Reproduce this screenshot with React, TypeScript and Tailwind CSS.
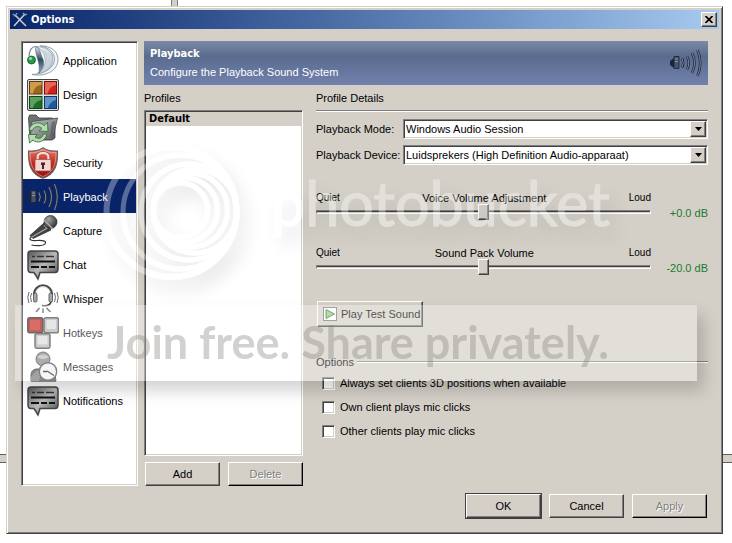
import React from 'react';

type IconProps = {
  className?: string;
};

const RAISED =
  'border border-t-white border-l-white border-r-[#404040] border-b-[#404040] shadow-[inset_-1px_-1px_0_#808080]';
const SUNKEN =
  'border border-t-[#808080] border-l-[#808080] border-r-white border-b-white shadow-[inset_1px_1px_0_#404040,inset_-1px_-1px_0_#d4d0c8]';

const IconApplication = () => (
  <svg viewBox="0 0 32 32" className="h-8 w-8">
    <defs>
      <linearGradient id="tsA" x1="0" y1="0" x2="1" y2="1">
        <stop offset="0" stopColor="#f4f7f9" />
        <stop offset="1" stopColor="#b4bfca" />
      </linearGradient>
      <linearGradient id="tsB" x1="0" y1="0" x2="0" y2="1">
        <stop offset="0" stopColor="#e3eaef" />
        <stop offset=".5" stopColor="#2f4a60" />
        <stop offset="1" stopColor="#9db0be" />
      </linearGradient>
    </defs>
    <path d="M13 1C24 0 31.500 7 31 15C30.500 25 20 32 5 29.500C19 29 27.500 22 27.500 14.500C27.500 8 22 2 13 1Z" fill="#f2f5f7" stroke="#7d8b97" strokeWidth=".8" />
    <path d="M10 1.500C21 2 26.500 8 26 15C25.500 22 20 27 10 28.500C21 23 21 9 10 1.500Z" fill="url(#tsA)" stroke="#94a2af" strokeWidth=".8" />
    <path d="M15 6C22 9 23 18 17 24" fill="none" stroke="#c9d3dc" strokeWidth="2.500" />
    <path d="M9 1.500C13 3 13.500 9 15.500 13C17.500 17 17 23 12 28C13 21 11.500 17 10 12C9 8 8 5 9 1.500Z" fill="url(#tsB)" stroke="#4b6072" strokeWidth=".6" />
    <path d="M2 11C2.500 5 5 1.500 9 1.500" fill="none" stroke="#73828e" strokeWidth="1.200" />
    <circle cx="4.500" cy="15" r="4" fill="#2c9650" stroke="#17572c" strokeWidth=".8" />
    <circle cx="3.500" cy="13.500" r="1.600" fill="#8fe0a5" />
  </svg>
);

const IconDesign = () => (
  <svg viewBox="0 0 32 32" className="h-8 w-8">
    <rect x=".5" y=".5" width="31" height="31" rx="1.500" fill="#dedede" stroke="#444" />
    <rect x="2.500" y="2.500" width="12.500" height="12.500" fill="#a06516" stroke="#5b3a09" />
    <path d="M3 3H14.500V6C9 6 7 10 6 14.500H3Z" fill="#cf9c4e" />
    <rect x="17.500" y="2.500" width="12" height="12.500" fill="#cf2417" stroke="#7a0e08" />
    <path d="M18 3H29V6C25 7 22 9 21 14.500H18Z" fill="#e96353" />
    <rect x="2.500" y="17.500" width="12.500" height="12" fill="#1f6d2b" stroke="#0f4319" />
    <path d="M3 18H14.500V21C9 22 7 25 6 29H3Z" fill="#5c9f60" />
    <rect x="17.500" y="17.500" width="12" height="12" fill="#205a98" stroke="#103762" />
    <path d="M18 18H29V21C25 22 22 25 21 29H18Z" fill="#5f94c8" />
  </svg>
);

const IconDownloads = () => (
  <svg viewBox="0 0 32 32" className="h-8 w-8">
    <defs>
      <linearGradient id="dlA" x1="0" y1="0" x2="1" y2="1">
        <stop offset="0" stopColor="#c3c6c7" />
        <stop offset="1" stopColor="#5b6062" />
      </linearGradient>
    </defs>
    <path d="M1.500 5L2.500 2H9L12 5H25.500V9H28V25L25 27H3Z" fill="#6d7375" stroke="#3c4142" strokeWidth=".8" />
    <path d="M5 8.500L30.500 5L25.500 26.500H3Z" fill="url(#dlA)" stroke="#454a4b" strokeWidth=".8" />
    <path d="M25 9L28.500 8.500L25 24.500H23Z" fill="#555" fillOpacity=".6" />
    <path d="M2 17C4 9 13 8 17 12.500L20.500 9.500L21 18.500L12 18L15 15.500C12 12.500 7 13 5.500 17.500Z" fill="#b5dcae" stroke="#3d7440" strokeWidth=".9" />
    <path d="M20 21C18 29 10 31 6 27L2.500 30L1.500 21.500L10.500 21.500L8 24C11 26.500 15 26 16.500 21Z" fill="#b5dcae" stroke="#3d7440" strokeWidth=".9" />
  </svg>
);

const IconSecurity = () => (
  <svg viewBox="0 0 32 32" className="h-8 w-8">
    <defs>
      <linearGradient id="secA" x1="0" y1="0" x2="0" y2="1">
        <stop offset="0" stopColor="#e98174" />
        <stop offset=".5" stopColor="#c5281f" />
        <stop offset="1" stopColor="#8b100c" />
      </linearGradient>
    </defs>
    <path d="M16 .8C12 3.500 6 4.500 1.500 4C1 18 4 27 16 31.300C28 27 31 18 30.500 4C26 4.500 20 3.500 16 .8Z" fill="url(#secA)" stroke="#666" strokeWidth="1.200" />
    <path d="M16 2.500C12 5 7 6 3 5.600C3 18 6 25.500 16 29.600C26 25.500 29 18 29 5.600C25 6 20 5 16 2.500Z" fill="none" stroke="#f7c1b8" strokeWidth=".6" />
    <path d="M10.500 13V10C10.500 4.500 21.500 4.500 21.500 10V13" fill="none" stroke="#f4dedb" strokeWidth="2.400" />
    <path d="M9 13V10C9 2.500 23 2.500 23 10V13" fill="none" stroke="#9a4540" strokeWidth=".6" />
    <rect x="8" y="12.500" width="16" height="11.500" rx="1" fill="#f1d5d1" stroke="#a54942" strokeWidth=".7" />
    <path d="M14 15.500H18V18H17V22H15V18H14Z" fill="#4a2421" />
  </svg>
);

const IconPlayback = ({ className }: IconProps) => (
  <svg viewBox="0 0 32 32" className={className}>
    <path d="M0 14L4 11V21L0 18Z" fill="#182644" />
    <path d="M4 9.500H9V21.500H4Z" fill="#4a5368" stroke="#1a2336" strokeWidth=".8" />
    <path d="M5 12H8M5 14.500H8" stroke="#8b95a5" strokeWidth="1" />
    <path d="M12 11.500Q14.500 16 12 20.500M17 9.500Q20.500 16 17 22.500M22 6Q27 16 22 26M27.500 3Q33 16 27.500 29" fill="none" stroke="#202b42" strokeWidth="2.600" />
    <path d="M12 11.500Q14.500 16 12 20.500M17 9.500Q20.500 16 17 22.500M22 6Q27 16 22 26M27.500 3Q33 16 27.500 29" fill="none" stroke="#7b8799" strokeWidth="1" />
  </svg>
);

const IconCapture = () => (
  <svg viewBox="0 0 32 32" className="h-8 w-8">
    <defs>
      <radialGradient id="micA" cx=".35" cy=".3" r=".8">
        <stop offset="0" stopColor="#a5a5a5" />
        <stop offset="1" stopColor="#262626" />
      </radialGradient>
    </defs>
    <path d="M17 8L24 15L6 23.500L3 20.500Z" fill="#424242" stroke="#222" strokeWidth=".7" />
    <path d="M17 10L20 13L5 22" stroke="#9f9f9f" strokeWidth="1.300" fill="none" />
    <circle cx="23.500" cy="7" r="6.500" fill="url(#micA)" stroke="#222" strokeWidth=".7" />
    <path d="M17 5L26 14" stroke="#b4b4b4" strokeWidth="1.200" />
    <path d="M4 22C1 25 5 26 10 25.500C16 25 19 26 18.500 28C18 30.500 11 31.500 4.500 30" fill="none" stroke="#333" strokeWidth="1.200" />
  </svg>
);

const IconChat = () => (
  <svg viewBox="0 0 32 32" className="h-8 w-8">
    <defs>
      <linearGradient id="chatA" x1="0" y1="0" x2="1" y2="1">
        <stop offset="0" stopColor="#565656" />
        <stop offset=".5" stopColor="#b9b9b9" />
        <stop offset="1" stopColor="#444" />
      </linearGradient>
    </defs>
    <path d="M4 2H28Q31 2 31 5V20Q31 23.500 28 23.500H13L11 30L7 23.500H4Q1 23.500 1 20V5Q1 2 4 2Z" fill="url(#chatA)" stroke="#444" strokeWidth="1.500" />
    <path d="M5 7.500H8M10 7.500H17M19 7.500H27" stroke="#333" strokeWidth="1.500" />
    <path d="M4 12.500H28M4 18H12M14 18H20M22 18H28" stroke="#111" strokeWidth="2" />
  </svg>
);

const IconWhisper = () => (
  <svg viewBox="0 0 32 32" className="h-8 w-8">
    <path d="M7 12C7-1 25-1 25 12" fill="none" stroke="#494949" strokeWidth="2.200" />
    <path d="M8.500 11C9 1.500 23 1.500 23.500 11" fill="none" stroke="#ccc" strokeWidth=".8" />
    <rect x="6.500" y="10" width="3.500" height="9" rx="1.500" fill="#aaa" stroke="#444" strokeWidth=".8" />
    <rect x="22" y="10" width="3.500" height="9" rx="1.500" fill="#aaa" stroke="#444" strokeWidth=".8" />
    <path d="M4.500 10Q2.500 14.500 4.500 19M2 9Q-.5 14.500 2 20M27.500 10Q29.500 14.500 27.500 19M30 9Q32.500 14.500 30 20" fill="none" stroke="#6a6a6a" strokeWidth="1" />
    <path d="M24 19Q23 23.500 15 22.500" fill="none" stroke="#444" strokeWidth="1.500" />
    <path d="M12.500 25L9 29M16 25.500V30M19.500 25L23.500 29" stroke="#444" strokeWidth="1.400" />
  </svg>
);

const IconHotkeys = () => (
  <svg viewBox="0 0 32 32" className="h-8 w-8">
    <rect x=".8" y=".8" width="15" height="15" rx="2" fill="#a8120d" stroke="#222" strokeWidth="1.500" />
    <rect x="3" y="3" width="10" height="10" rx="1" fill="#c8281f" />
    <rect x="17" y=".8" width="14.500" height="15" rx="2" fill="#b4b4b4" stroke="#444" strokeWidth="1.500" />
    <rect x="19.500" y="3" width="9.500" height="9" rx="1" fill="#dcdcdc" />
    <rect x="8" y="16.800" width="15" height="14.500" rx="2" fill="#b4b4b4" stroke="#444" strokeWidth="1.500" />
    <rect x="10.500" y="19" width="10" height="8.500" rx="1" fill="#dcdcdc" />
  </svg>
);

const IconMessages = () => (
  <svg viewBox="0 0 32 32" className="h-8 w-8">
    <path d="M4 30V24Q4 19 9 18H23Q28 20 29 30Z" fill="#4e4e4e" stroke="#333" />
    <path d="M4 26Q10 17 15 19L12 30H4Z" fill="#777" />
    <circle cx="16" cy="8" r="7" fill="#858585" stroke="#444" />
    <path d="M10 6Q16 1 22 6Q16 10 10 6Z" fill="#bbb" />
    <circle cx="21" cy="20.500" r="8.700" fill="#f1f1f1" stroke="#444" strokeWidth="1.400" />
    <path d="M20 20L27 24.500M16 20.500H20" stroke="#222" strokeWidth="1.300" />
  </svg>
);

const MENU = [
  { label: 'Application', icon: <IconApplication /> },
  { label: 'Design', icon: <IconDesign /> },
  { label: 'Downloads', icon: <IconDownloads /> },
  { label: 'Security', icon: <IconSecurity /> },
  { label: 'Playback', icon: <IconPlayback className="h-8 w-8" /> },
  { label: 'Capture', icon: <IconCapture /> },
  { label: 'Chat', icon: <IconChat /> },
  { label: 'Whisper', icon: <IconWhisper /> },
  { label: 'Hotkeys', icon: <IconHotkeys /> },
  { label: 'Messages', icon: <IconMessages /> },
  { label: 'Notifications', icon: <IconChat /> },
];

const TitleBar = () => (
  <header className="flex h-[19px] items-center bg-linear-to-r from-[#0a246a] to-[#a6caf0] pr-[2px] pl-[2px] text-white">
    <svg viewBox="0 0 16 16" className="mr-[3px] h-4 w-4">
      <path d="M3 3L14 14M13 2L2 14" stroke="#c9cdd3" strokeWidth="1.500" />
      <path d="M1 2L3 4L5 1M11 1L13 3L15 2" fill="none" stroke="#9ca4b0" strokeWidth="1.300" />
    </svg>
    <h1 className="flex-1 pt-px font-['DejaVu_Sans_Condensed',sans-serif] font-bold">Options</h1>
    <button
      aria-label="Close"
      className={`flex h-[15px] w-4 items-center justify-center bg-[#d4d0c8] ${RAISED}`}
    >
      <svg viewBox="0 0 8 7" className="h-[7px] w-2">
        <path d="M.5 0L7.500 7M7.500 0L.5 7" stroke="#000" strokeWidth="1.700" />
      </svg>
    </button>
  </header>
);

const Sidebar = () => {
  const [active, setActive] = React.useState('Playback');

  return (
    <nav className={`w-[117px] shrink-0 bg-white p-px ${SUNKEN}`}>
      {MENU.map((item) => (
        <button
          key={item.label}
          onClick={() => setActive(item.label)}
          className={`flex h-[34px] w-full items-center gap-1 pt-px pl-1 text-left ${
            active === item.label ? 'bg-[#0a246a] text-white' : ''
          }`}
        >
          {item.icon}
          {item.label}
        </button>
      ))}
    </nav>
  );
};

type ButtonProps = {
  children: React.ReactNode;
  disabled?: boolean;
};

const PushButton = ({ children, disabled }: ButtonProps) => (
  <button
    disabled={disabled}
    className={`h-6 w-[75px] disabled:border-r-black disabled:border-b-black disabled:text-[#808080] disabled:text-shadow-[1px_1px_0_#fff] ${RAISED}`}
  >
    {children}
  </button>
);

type ComboProps = {
  id: string;
  label: string;
  value: string;
};

const Combo = ({ id, label, value }: ComboProps) => (
  <div className="flex items-center">
    <label htmlFor={id} className="w-[87px] shrink-0">
      {label}
    </label>
    <div className={`relative h-5 flex-1 bg-white p-px ${SUNKEN}`}>
      <select id={id} className="block h-4 w-full appearance-none pl-px leading-4 outline-none">
        <option>{value}</option>
      </select>
      <span
        className={`pointer-events-none absolute top-px right-px flex h-4 w-4 items-center justify-center bg-[#d4d0c8] ${RAISED}`}
      >
        <svg viewBox="0 0 7 4" className="h-1 w-[7px]">
          <path d="M0 0H7L3.500 4Z" />
        </svg>
      </span>
    </div>
  </div>
);

type VolumeProps = {
  id: string;
  label: string;
  value: string;
};

const Volume = ({ id, label, value }: VolumeProps) => (
  <div className="flex items-end">
    <div className="flex-1">
      <div className="flex h-[13px] items-center justify-between">
        <span className="text-[10px]">Quiet</span>
        <label htmlFor={id}>{label}</label>
        <span className="text-[10px]">Loud</span>
      </div>
      <input
        id={id}
        type="range"
        defaultValue={50}
        className="block h-4 w-full appearance-none bg-transparent [&::-webkit-slider-runnable-track]:h-1 [&::-webkit-slider-runnable-track]:border [&::-webkit-slider-runnable-track]:border-t-[#808080] [&::-webkit-slider-runnable-track]:border-r-white [&::-webkit-slider-runnable-track]:border-b-white [&::-webkit-slider-runnable-track]:border-l-[#808080] [&::-webkit-slider-runnable-track]:bg-linear-to-b [&::-webkit-slider-runnable-track]:from-[#404040] [&::-webkit-slider-runnable-track]:from-50% [&::-webkit-slider-runnable-track]:to-[#d4d0c8] [&::-webkit-slider-runnable-track]:to-50% [&::-webkit-slider-thumb]:-mt-[7px] [&::-webkit-slider-thumb]:h-4 [&::-webkit-slider-thumb]:w-[11px] [&::-webkit-slider-thumb]:appearance-none [&::-webkit-slider-thumb]:border [&::-webkit-slider-thumb]:border-t-white [&::-webkit-slider-thumb]:border-r-[#404040] [&::-webkit-slider-thumb]:border-b-[#404040] [&::-webkit-slider-thumb]:border-l-white [&::-webkit-slider-thumb]:bg-[#d4d0c8] [&::-webkit-slider-thumb]:shadow-[inset_-1px_-1px_0_#808080]"
      />
    </div>
    <output htmlFor={id} className="w-[57px] text-right text-[#1c7a2c]">
      {value}
    </output>
  </div>
);

const Profiles = () => (
  <section className="flex w-[159px] shrink-0 flex-col">
    <h3 className="h-[25px] leading-[26px]">Profiles</h3>
    <ul className={`flex-1 bg-white p-px ${SUNKEN}`}>
      <li className="h-[14px] bg-[#d4d0c8] pl-[3px] font-['DejaVu_Sans_Condensed',sans-serif] leading-[14px] font-bold">
        Default
      </li>
    </ul>
    <div className="mt-[6px] flex justify-between pl-px">
      <PushButton>Add</PushButton>
      <PushButton disabled>Delete</PushButton>
    </div>
  </section>
);

const CHECKS = [
  'Always set clients 3D positions when available',
  'Own client plays mic clicks',
  'Other clients play mic clicks',
];

const ProfileDetails = () => (
  <section className="flex min-w-0 flex-1 flex-col">
    <h3 className="h-[26px] border-b border-[#808080] leading-[26px] shadow-[0_1px_0_#fff]">
      Profile Details
    </h3>
    <div className="mt-2 flex flex-col gap-[6px]">
      <Combo id="mode" label="Playback Mode:" value="Windows Audio Session" />
      <Combo
        id="device"
        label="Playback Device:"
        value="Luidsprekers (High Definition Audio-apparaat)"
      />
    </div>
    <div className="mt-[26px] flex flex-col gap-[26px]">
      <Volume id="voice" label="Voice Volume Adjustment" value="+0.0 dB" />
      <Volume id="pack" label="Sound Pack Volume" value="-20.0 dB" />
    </div>
    <button
      className={`mt-[26px] ml-px flex h-[26px] w-[106px] items-center gap-1 pl-[5px] whitespace-nowrap ${RAISED}`}
    >
      <svg viewBox="0 0 14 14" className="h-[14px] w-[14px] shrink-0">
        <rect x=".5" y=".5" width="13" height="13" fill="#fff" stroke="#777" />
        <path d="M3 2.500L11.500 7L3 11.500Z" fill="#8ecb7d" stroke="#347a31" />
      </svg>
      Play Test Sound
    </button>
    <fieldset className="mt-7">
      <legend className="flex w-full items-center gap-[3px] leading-[14px]">
        Options
        <span className="h-[2px] flex-1 border-t border-b border-t-[#808080] border-b-white" />
      </legend>
      <div className="mt-[7px] ml-[6px] flex flex-col gap-[10px]">
        {CHECKS.map((text) => (
          <label key={text} className="flex h-[14px] items-center gap-[5px]">
            <input type="checkbox" className={`h-[13px] w-[13px] appearance-none bg-white ${SUNKEN}`} />
            {text}
          </label>
        ))}
      </div>
    </fieldset>
  </section>
);

const Watermark = () => (
  <div className="pointer-events-none absolute inset-0 overflow-hidden">
    <svg width="732" height="543" viewBox="0 0 732 543">
      <defs>
        <filter id="wmShadow" x="-20%" y="-30%" width="150%" height="190%">
          <feDropShadow dx="8" dy="11" stdDeviation="9" floodColor="#000" floodOpacity=".28" />
        </filter>
        <filter id="wmSoft" x="-10%" y="-60%" width="120%" height="220%">
          <feGaussianBlur stdDeviation="8" />
        </filter>
        <mask id="wmBelow" maskUnits="userSpaceOnUse" x="0" y="0" width="732" height="543">
          <rect width="732" height="543" fill="#fff" />
          <rect x="15" y="305" width="682" height="76" fill="#000" />
        </mask>
      </defs>
      <g filter="url(#wmShadow)" opacity=".32" fill="none" stroke="#fff">
        <circle cx="171.500" cy="212" r="65" strokeWidth="6" />
        <circle cx="180" cy="212" r="57" strokeWidth="5" />
        <circle cx="189" cy="212" r="48" strokeWidth="5" />
        <circle cx="195" cy="211" r="42" strokeWidth="5" />
        <circle cx="190.500" cy="210" r="37" strokeWidth="5" />
        <circle cx="185.500" cy="210" r="32" strokeWidth="5" />
        <circle cx="180.500" cy="210" r="27" strokeWidth="5" />
      </g>
      <text
        x="271"
        y="226"
        fill="#fff"
        stroke="#fff"
        opacity=".34"
        filter="url(#wmShadow)"
        className="font-['Lato',sans-serif] text-[61px]"
      >
        photobucket
      </text>
      <g mask="url(#wmBelow)">
        <rect x="22" y="315" width="682" height="76" opacity=".17" filter="url(#wmSoft)" />
      </g>
      <rect x="15" y="305" width="682" height="76" fill="#fff" opacity=".32" />
      <text
        x="107"
        y="359"
        fill="#85827d"
        opacity=".36"
        className="font-['Lato',sans-serif] text-[45px] font-bold"
      >
        Join free. Share privately.
      </text>
    </svg>
  </div>
);

const App = () => (
  <main className="relative bg-white pt-[6px] pr-[9px] pb-[10px] pl-[6px] font-['Liberation_Sans','DejaVu_Sans_Condensed',sans-serif] text-[11px] leading-[14px] text-black">
    <div className="absolute top-0 left-[171px] h-2 w-[7px] border-r border-l border-[#808080] bg-[#d4d0c8]" />
    <div className="absolute inset-x-0 top-[454px] h-[9px] border-t border-b border-[#606060] bg-[#d4d0c8]" />

    <div className="relative border border-t-[#d4d0c8] border-r-[#404040] border-b-[#404040] border-l-[#d4d0c8] bg-[#d4d0c8] p-[3px] shadow-[inset_1px_1px_0_#fff,inset_-1px_-1px_0_#808080]">
      <TitleBar />
      <div className="flex gap-[6px] pt-3 pr-[11px] pl-[11px]">
        <Sidebar />
        <div className="flex min-w-0 flex-1 flex-col">
          <div className="flex h-11 items-center justify-between bg-linear-to-b from-[#7c8aa4] via-[#596c8e] via-35% to-[#7281ad] pr-[6px] pl-[6px] text-white">
            <div>
              <h2 className="font-['DejaVu_Sans_Condensed',sans-serif] leading-[18px] font-bold">
                Playback
              </h2>
              <p className="leading-[18px]">Configure the Playback Sound System</p>
            </div>
            <IconPlayback className="h-8 w-8" />
          </div>
          <div className="flex min-h-[401px] gap-[13px]">
            <Profiles />
            <ProfileDetails />
          </div>
        </div>
      </div>
      <footer className="mt-[7px] mb-[11px] flex items-center justify-end gap-2 pr-3">
        <div className="-mr-px border border-[#404040]">
          <PushButton>OK</PushButton>
        </div>
        <PushButton>Cancel</PushButton>
        <PushButton disabled>Apply</PushButton>
      </footer>
    </div>

    <Watermark />
  </main>
);

export default App;
